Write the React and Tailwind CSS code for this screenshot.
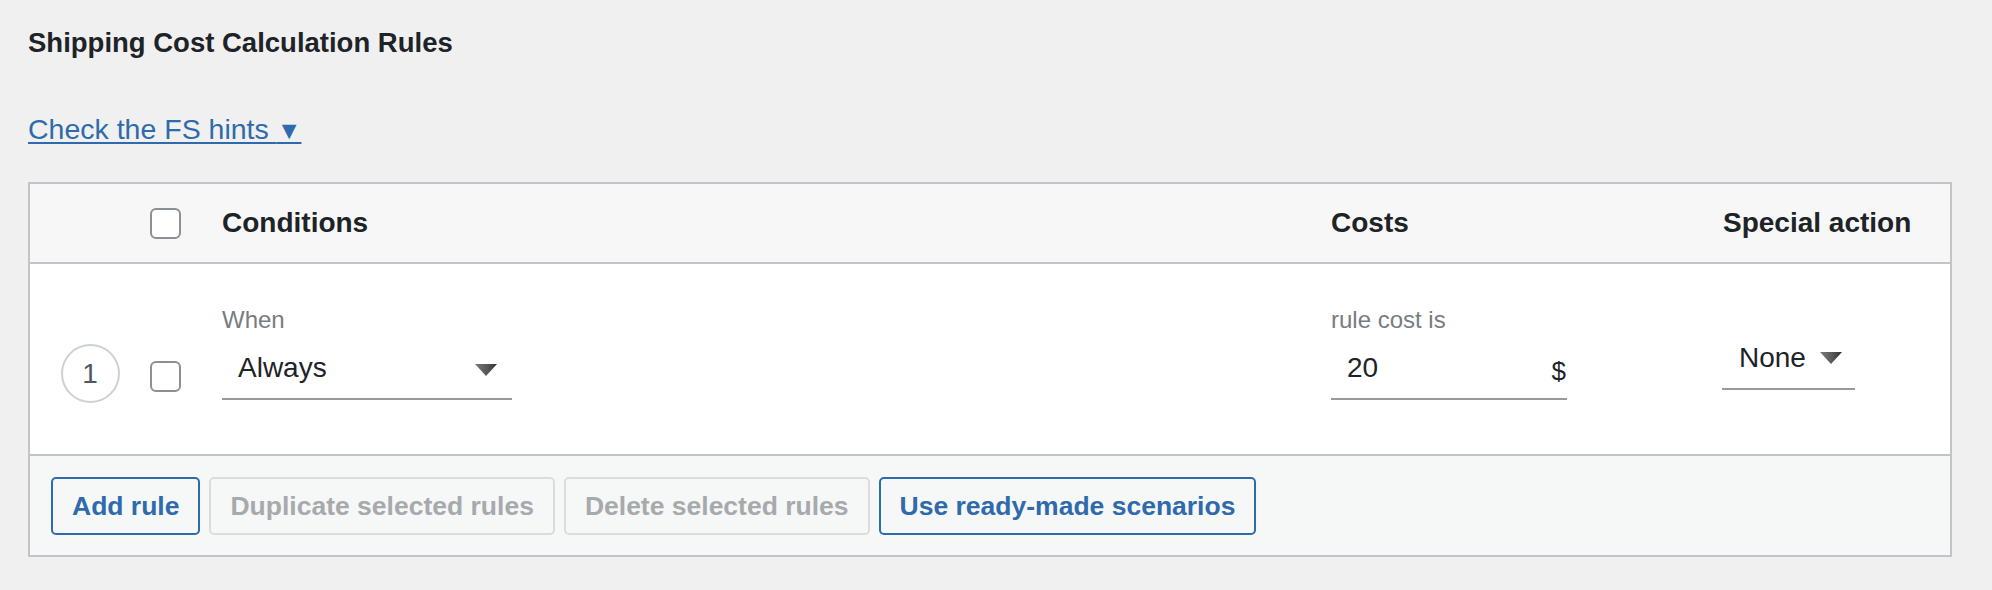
/* Shipping cost rules table — WP admin look, scaled 2x */

function Caret({ id, className }) {
  return (
    <svg viewBox="0 0 22 12" className={className} aria-hidden="true">
      <defs>
        <linearGradient id={id} x1="0" y1="0" x2="1" y2="0">
          <stop offset="0" stopColor="#7a7a7a" />
          <stop offset="0.6" stopColor="#555555" />
          <stop offset="1" stopColor="#2e2e2e" />
        </linearGradient>
      </defs>
      <polygon points="0,0 22,0 11,12" fill={`url(#${id})`} />
    </svg>
  )
}

function Checkbox() {
  return <span className="block w-[31px] h-[31px] rounded-[6px] border-2 border-[#8c8f94] bg-white" />
}

function Button({ children, disabled }) {
  return (
    <button
      className={
        disabled
          ? 'h-[58px] px-[19px] rounded-[5px] border-2 border-[#dcdcde] bg-[#f6f7f7] text-[#a7aaad] text-[26.5px] font-bold leading-none'
          : 'h-[58px] px-[19px] rounded-[5px] border-2 border-[#2f6aad] bg-[#f6f7f7] text-[#2f6aad] text-[26.5px] font-bold leading-none'
      }>
      {children}
    </button>
  )
}

export default function App() {
  return (
    <div className="w-full h-[590px] bg-[#f0f0f1] pt-[27px] pl-[28px] pr-[40px] font-['Liberation_Sans',Arial,sans-serif] text-[#1d2327]">
      <h2 className="text-[27.5px] leading-[32px] font-bold m-0">Shipping Cost Calculation Rules</h2>

      <div className="mt-[54px] h-[32px]">
        <a className="text-[28.5px] leading-[32px] text-[#2f6aad] underline decoration-2 underline-offset-[3px] cursor-pointer">
          Check the FS hints <span className="text-[25px]">▼</span>
        </a>
      </div>

      {/* table */}
      <div className="mt-[37px] border-2 border-[#c3c4c7] bg-white">
        {/* header */}
        <div className="flex items-center h-[80px] bg-[#f7f7f7] border-b-2 border-[#c3c4c7] text-[28px] leading-[32px] font-bold">
          <div className="w-[120px] shrink-0" />
          <div className="w-[72px] shrink-0"><Checkbox /></div>
          <div className="flex-1">Conditions</div>
          <div className="w-[391px] shrink-0">Costs</div>
          <div className="w-[228px] shrink-0 pl-[1px]">Special action</div>
        </div>

        {/* rule row */}
        <div className="flex items-start h-[192px] border-b-2 border-[#c3c4c7]">
          <div className="w-[120px] shrink-0 pt-[80px] flex justify-center">
            <span className="w-[59px] h-[59px] rounded-full border-2 border-[#cdd0d4] flex items-center justify-center text-[28px] text-[#50575e]">1</span>
          </div>
          <div className="w-[72px] shrink-0 pt-[97px]"><Checkbox /></div>

          <div className="flex-1 pt-[42px]">
            <div className="text-[24px] leading-[28px] text-[#787c82]">When</div>
            <div className="mt-[18px] w-[290px] flex items-center justify-between pl-[16px] pr-[15px] pb-[14px] border-b-2 border-[#999999]">
              <span className="text-[28px] leading-[32px] text-[#1d2327]">Always</span>
              <Caret id="c1" className="w-[22px] h-[12px] mt-[4px]" />
            </div>
          </div>

          <div className="w-[391px] shrink-0 pt-[42px]">
            <div className="text-[24px] leading-[28px] text-[#787c82]">rule cost is</div>
            <div className="mt-[18px] w-[236px] flex items-baseline justify-between pl-[16px] pr-[1px] pb-[14px] border-b-2 border-[#999999]">
              <span className="text-[28px] leading-[32px] text-[#1d2327]">20</span>
              <span className="text-[26px] leading-[32px] text-[#1d2327] relative top-[3px]">$</span>
            </div>
          </div>

          <div className="w-[228px] shrink-0 pt-[78px]">
            <div className="w-[133px] flex items-center pl-[17px] pb-[14px] border-b-2 border-[#999999]">
              <span className="text-[28px] leading-[32px] text-[#1d2327]">None</span>
              <Caret id="c2" className="ml-[14px] w-[22px] h-[12px]" />
            </div>
          </div>
        </div>

        {/* footer actions */}
        <div className="flex items-center gap-[9px] h-[99px] bg-[#f6f7f7] pl-[21px] pt-[1px]">
          <Button>Add rule</Button>
          <Button disabled>Duplicate selected rules</Button>
          <Button disabled>Delete selected rules</Button>
          <Button>Use ready-made scenarios</Button>
        </div>
      </div>
    </div>
  )
}
